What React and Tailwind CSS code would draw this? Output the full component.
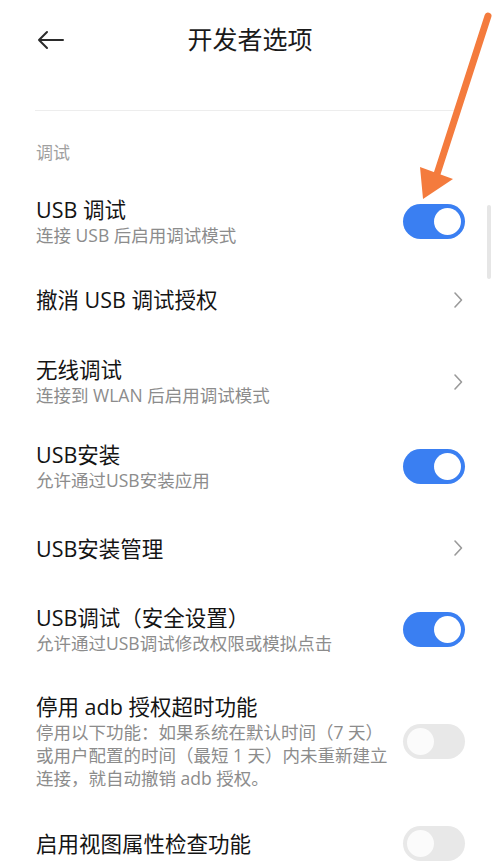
import React from "react";

const font = { fontFamily: '"Open Sans", "Noto Sans CJK SC", "Noto Sans", sans-serif' };

// Rows of the developer options list
const rows = [
    { title: "USB 调试", sub: ["连接 USB 后启用调试模式"], kind: "on", h: "h-[78px]" },
    { title: "撤消 USB 调试授权", kind: "link", h: "h-[79px]" },
    { title: "无线调试", sub: ["连接到 WLAN 后启用调试模式"], kind: "link", h: "h-[85px]" },
    { title: "USB安装", sub: ["允许通过USB安装应用"], kind: "on", h: "h-[84px]" },
    { title: "USB安装管理", kind: "link", h: "h-[80px]" },
    { title: "USB调试（安全设置）", sub: ["允许通过USB调试修改权限或模拟点击"], kind: "on", h: "h-[82px]" },
    {
        title: "停用 adb 授权超时功能",
        sub: [
            "停用以下功能：如果系统在默认时间（7 天）",
            "或用户配置的时间（最短 1 天）内未重新建立",
            "连接，就自动撤销 adb 授权。",
        ],
        kind: "off",
        h: "h-[142px]",
    },
    { title: "启用视图属性检查功能", kind: "off", h: "h-[62px]" },
];

function Toggle({ on }) {
    return (
        <div
            className={
                on
                    ? "w-[62px] h-[35px] rounded-full bg-[#3a7ff2] p-[4px] flex justify-end shrink-0"
                    : "w-[62px] h-[35px] rounded-full bg-[#e8e8e8] p-[4px] flex justify-start shrink-0"
            }
        >
            <div className={on ? "w-[27px] h-[27px] rounded-full bg-white" : "w-[27px] h-[27px] rounded-full bg-[#fbfbfb]"} />
        </div>
    );
}

function Chevron() {
    return (
        <svg width="12" height="20" viewBox="0 0 12 20" className="mr-[1px] shrink-0">
            <path d="M3 3 L9.5 10 L3 17" fill="none" stroke="#9a9a9a" strokeWidth="1.6" strokeLinecap="round" strokeLinejoin="round" />
        </svg>
    );
}

function Row({ row }) {
    const multi = row.sub && row.sub.length > 1;
    return (
        <div className={`flex items-center justify-between pl-[36px] pr-[35px] ${row.h}`}>
            <div className="flex flex-col">
                <div className="text-[21.5px] leading-[27px] text-[#141414]">{row.title}</div>
                {row.sub && (
                    <div className={multi ? "mt-[1px] text-[17.5px] leading-[23px] text-[#8c8c8c]" : "text-[17.5px] leading-[24px] text-[#8c8c8c]"}>
                        {row.sub.map((line, i) => (
                            <div key={i}>{line}</div>
                        ))}
                    </div>
                )}
            </div>
            {row.kind === "link" ? <Chevron /> : <Toggle on={row.kind === "on"} />}
        </div>
    );
}

export default function App() {
    return (
        <div className="relative w-[500px] h-[862px] overflow-hidden bg-white" style={font}>
            {/* header */}
            <div className="grid grid-cols-[1fr_auto_1fr] items-center h-[80px]">
                <div className="pl-[36px] flex items-center">
                    <svg width="28" height="20" viewBox="0 0 28 20">
                        <path d="M3 10 H27 M11 2 L3 10 L11 18" fill="none" stroke="#2b2b2b" strokeWidth="2" strokeLinecap="round" strokeLinejoin="round" />
                    </svg>
                </div>
                <div className="text-[25px] leading-[32px] text-[#1a1a1a] -mt-[2px]">开发者选项</div>
                <div />
            </div>
            <div className="mt-[30px] ml-[35px] mr-[43px] h-px bg-[#ededed]" />

            <div className="pl-[36px] pt-[32px] pb-[19px] text-[17px] leading-[20px] text-[#a0a0a0]">调试</div>

            {rows.map((row, i) => (
                <Row key={i} row={row} />
            ))}

            {/* scrollbar */}
            <div className="absolute left-[487px] top-[205px] w-[4px] h-[74px] rounded-full bg-[#e6e6e6]" />

            {/* annotation arrow */}
            <svg className="absolute left-0 top-0 pointer-events-none" width="500" height="862" viewBox="0 0 500 862">
                <line x1="488" y1="16" x2="437" y2="174" stroke="#f47b3d" strokeWidth="7" strokeLinecap="round" />
                <polygon points="420,167 453,179 423,199" fill="#f47b3d" />
            </svg>
        </div>
    );
}
